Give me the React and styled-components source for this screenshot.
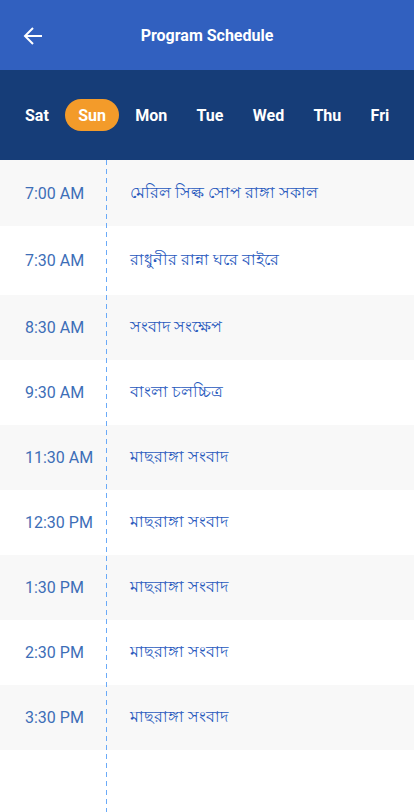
import styled, {createGlobalStyle} from 'styled-components'
import {useState} from 'react'

const GlobalStyle = createGlobalStyle`
  * {
    box-sizing: border-box;
  }
  body {
    margin: 0;
    background: #fff;
    font-family: Roboto, "Noto Sans", "Liberation Sans", sans-serif;
  }
`

const Screen = styled.div`
  width: 414px;
  min-height: 812px;
  display: flex;
  flex-direction: column;
  background: #fff;
`

const Header = styled.header`
  height: 70px;
  background: #3160bf;
  display: flex;
  align-items: center;
  position: relative;
  justify-content: center;
`

const BackButton = styled.button`
  position: absolute;
  left: 20px;
  top: 23px;
  width: 26px;
  height: 26px;
  padding: 0;
  border: 0;
  background: none;
  display: flex;
  align-items: center;
  justify-content: center;
  cursor: pointer;
`

const Title = styled.h1`
  margin: 0;
  color: #fff;
  font-size: 16px;
  font-weight: 700;
`

const DayBar = styled.nav`
  height: 90px;
  background: #163d78;
  display: flex;
  align-items: center;
  gap: 3.3px;
  padding-left: 12px;
  overflow-x: auto;
`

const Day = styled.button`
  height: 32px;
  padding: 0 13px;
  border: 0;
  border-radius: 16px;
  background: ${p => (p.$active ? '#f39b2a' : 'transparent')};
  color: #fff;
  font-family: inherit;
  font-size: 16px;
  font-weight: 700;
  cursor: pointer;
  flex-shrink: 0;
`

const List = styled.div`
  flex: 1;
  position: relative;
  display: flex;
  flex-direction: column;

  &::after {
    content: '';
    position: absolute;
    top: 0;
    bottom: 0;
    left: 106px;
    width: 1px;
    background: repeating-linear-gradient(to bottom, #6aaaf8 0 5px, transparent 5px 9px);
  }
`

const Row = styled.div`
  height: ${p => p.$h}px;
  display: flex;
  align-items: center;
  background: ${p => (p.$alt ? '#f8f8f8' : '#fff')};
`

const Time = styled.div`
  width: 130px;
  padding-left: 25px;
  color: #3d6eb7;
  font-size: 16px;
`

const Show = styled.div`
  color: #2658bd;
  font-size: 16px;
`

const days = ['Sat', 'Sun', 'Mon', 'Tue', 'Wed', 'Thu', 'Fri']

const schedule = [
    {time: '7:00 AM', title: 'মেরিল সিল্ক সোপ রাঙ্গা সকাল', h: 66},
    {time: '7:30 AM', title: 'রাধুনীর রান্না ঘরে বাইরে', h: 69},
    {time: '8:30 AM', title: 'সংবাদ সংক্ষেপ', h: 65},
    {time: '9:30 AM', title: 'বাংলা চলচ্চিত্র', h: 65},
    {time: '11:30 AM', title: 'মাছরাঙ্গা সংবাদ', h: 65},
    {time: '12:30 PM', title: 'মাছরাঙ্গা সংবাদ', h: 65},
    {time: '1:30 PM', title: 'মাছরাঙ্গা সংবাদ', h: 65},
    {time: '2:30 PM', title: 'মাছরাঙ্গা সংবাদ', h: 65},
    {time: '3:30 PM', title: 'মাছরাঙ্গা সংবাদ', h: 65},
]

export default function App() {
    const [day, setDay] = useState('Sun')

    return (
        <Screen>
            <GlobalStyle/>
            <Header>
                <BackButton aria-label="Back">
                    <svg width="20" height="20" viewBox="0 0 20 20" fill="none" stroke="#fff" strokeWidth="2">
                        <path d="M19 10H2M10 2L2 10l8 8"/>
                    </svg>
                </BackButton>
                <Title>Program Schedule</Title>
            </Header>
            <DayBar>
                {days.map(d => (
                    <Day key={d} $active={d === day} onClick={() => setDay(d)}>{d}</Day>
                ))}
            </DayBar>
            <List>
                {schedule.map((item, i) => (
                    <Row key={i} $alt={i % 2 === 0} $h={item.h}>
                        <Time>{item.time}</Time>
                        <Show>{item.title}</Show>
                    </Row>
                ))}
            </List>
        </Screen>
    )
}
